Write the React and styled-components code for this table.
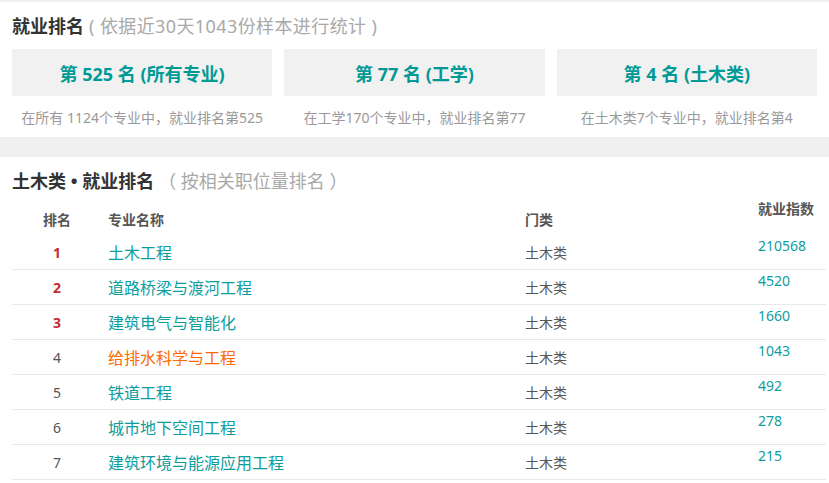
import styled, { createGlobalStyle } from 'styled-components'

const GlobalStyle = createGlobalStyle`
  html, body {
    margin: 0;
    padding: 0;
    background: #f0f0f0;
    font-family: "Noto Sans", "Noto Sans CJK SC", sans-serif;
  }
`

const colors = {
  teal: '#0e9d9d',
  boxTeal: '#009a96',
  red: '#c62a2f',
  orange: '#ff6a00',
  text: '#333333',
  muted: '#a9a9a9',
  caption: '#999999',
  header: '#555555',
  line: '#e9e9e9',
  panel: '#f1f1f1',
}

const Page = styled.div`
  padding-top: 2px;
  display: flex;
  flex-direction: column;
  gap: 20px;
  height: 483px;
  overflow: hidden;
  box-sizing: border-box;
`

const Section = styled.section`
  background: #fff;
  padding: 12px ${(p) => p.$right || 12}px 9px 12px;
  flex: ${(p) => (p.$grow ? 1 : 'none')};
`

const Title = styled.h2`
  margin: 0;
  font-size: 18px;
  line-height: 25px;
  font-weight: 700;
  color: ${colors.text};
  white-space: nowrap;
`

const TitleNote = styled.span`
  font-weight: 400;
  color: ${colors.muted};
  margin-left: ${(p) => p.$gap || 6}px;
  letter-spacing: ${(p) => p.$spacing || 0}px;
`

const Stats = styled.div`
  display: grid;
  grid-template-columns: repeat(3, 1fr);
  column-gap: 12px;
  margin-top: 10px;
`

const Stat = styled.div`
  display: flex;
  flex-direction: column;
  align-items: stretch;
`

const StatBox = styled.div`
  height: 47px;
  background: ${colors.panel};
  display: flex;
  align-items: center;
  justify-content: center;
  font-size: 18px;
  font-weight: 700;
  color: ${colors.boxTeal};
  white-space: pre;
`

const StatCaption = styled.div`
  margin-top: 12px;
  font-size: 14px;
  line-height: 20px;
  color: ${colors.caption};
  text-align: center;
  white-space: pre;
`

const Table = styled.div`
  margin-top: 5px;
`

const Row = styled.div`
  display: grid;
  grid-template-columns: 90px 417px 233px 1fr;
  height: ${(p) => (p.$head ? 36 : 35)}px;
  box-sizing: border-box;
  border-bottom: ${(p) => (p.$head ? 'none' : `1px solid ${colors.line}`)};
  padding-top: ${(p) => (p.$head ? 6 : 0)}px;
  align-items: center;
`

const HeadCell = styled.div`
  font-size: 14px;
  font-weight: 700;
  color: ${colors.header};
  text-align: ${(p) => (p.$center ? 'center' : 'left')};
  padding-left: ${(p) => (p.$center ? 0 : 6)}px;
  align-self: ${(p) => (p.$top ? 'start' : 'center')};
  margin-top: ${(p) => (p.$top ? -6 : 0)}px;
  line-height: 20px;
`

const RankCell = styled.div`
  text-align: center;
  font-size: 14px;
  font-weight: ${(p) => (p.$top3 ? 700 : 400)};
  color: ${(p) => (p.$top3 ? colors.red : colors.header)};
`

const NameCell = styled.div`
  padding-left: 6px;
  font-size: 16px;
  color: ${(p) => (p.$active ? colors.orange : colors.teal)};
`

const CategoryCell = styled.div`
  padding-left: 6px;
  font-size: 14px;
  color: ${colors.header};
`

const IndexCell = styled.div`
  padding-left: 6px;
  align-self: start;
  padding-top: 1px;
  line-height: 20px;
  font-size: 14px;
  color: ${colors.teal};
`

const stats = [
  { label: '第 525 名 (所有专业)', caption: '在所有 1124个专业中，就业排名第525' },
  { label: '第 77 名 (工学)', caption: '在工学170个专业中，就业排名第77' },
  { label: '第 4 名 (土木类)', caption: '在土木类7个专业中，就业排名第4' },
]

const majors = [
  { name: '土木工程', index: 210568 },
  { name: '道路桥梁与渡河工程', index: 4520 },
  { name: '建筑电气与智能化', index: 1660 },
  { name: '给排水科学与工程', index: 1043, active: true },
  { name: '铁道工程', index: 492 },
  { name: '城市地下空间工程', index: 278 },
  { name: '建筑环境与能源应用工程', index: 215 },
]

function App() {
  return (
    <>
      <GlobalStyle />
      <Page>
        <Section>
          <Title>
            就业排名
            <TitleNote $gap={5} $spacing={0.4}>( 依据近30天1043份样本进行统计 )</TitleNote>
          </Title>
          <Stats>
            {stats.map((s) => (
              <Stat key={s.label}>
                <StatBox>{s.label}</StatBox>
                <StatCaption>{s.caption}</StatCaption>
              </Stat>
            ))}
          </Stats>
        </Section>
        <Section $right={3} $grow>
          <Title>
            土木类 • 就业排名
            <TitleNote $gap={4}>（ 按相关职位量排名 ）</TitleNote>
          </Title>
          <Table>
            <Row $head>
              <HeadCell $center>排名</HeadCell>
              <HeadCell>专业名称</HeadCell>
              <HeadCell>门类</HeadCell>
              <HeadCell $top>就业指数</HeadCell>
            </Row>
            {majors.map((m, i) => (
              <Row key={m.name}>
                <RankCell $top3={i < 3}>{i + 1}</RankCell>
                <NameCell $active={m.active}>{m.name}</NameCell>
                <CategoryCell>土木类</CategoryCell>
                <IndexCell>{m.index}</IndexCell>
              </Row>
            ))}
          </Table>
        </Section>
      </Page>
    </>
  )
}

export default App
